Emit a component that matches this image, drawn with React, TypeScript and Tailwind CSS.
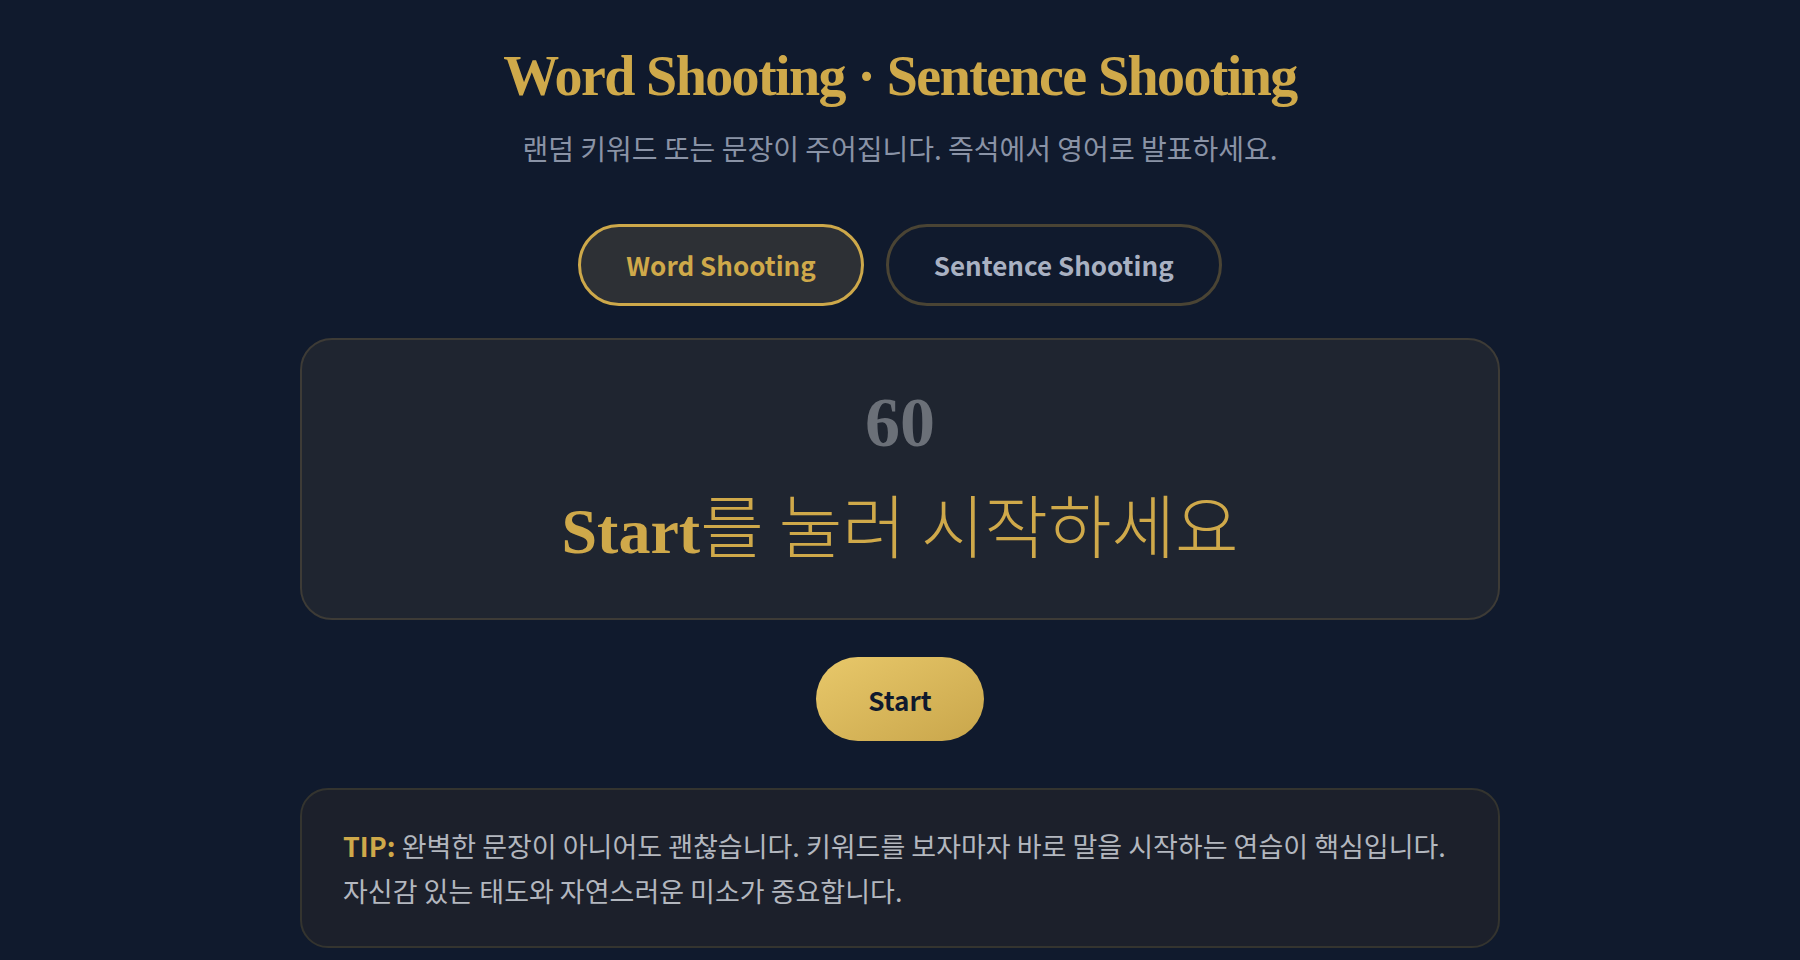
import { useState } from 'react';

type Mode = 'word' | 'sentence';

const MODES: { label: string; value: Mode }[] = [
  { label: 'Word Shooting', value: 'word' },
  { label: 'Sentence Shooting', value: 'sentence' },
];

const SANS = "font-['Noto_Sans_CJK_KR','Noto_Sans',sans-serif]";

export default function App() {
  const [mode, setMode] = useState<Mode>('word');

  return (
    <div className={`min-h-screen w-full bg-[#101a2d] ${SANS}`}>
      <div className="mx-auto flex w-[1200px] flex-col items-center pt-[44px]">
        {/* Heading */}
        <h1 className="font-['Liberation_Serif','DejaVu_Serif',serif] text-[56px] font-bold leading-[64px] tracking-[-1.6px] text-[#cfa94a]">
          Word Shooting · Sentence Shooting
        </h1>
        <p className="mt-[22px] text-[28px] leading-[36px] text-[#8a93a6]">
          랜덤 키워드 또는 문장이 주어집니다. 즉석에서 영어로 발표하세요.
        </p>

        {/* Mode tabs */}
        <div className="mt-[58px] flex gap-[22px]">
          {MODES.map(m => (
            <button
              key={m.value}
              onClick={() => setMode(m.value)}
              className={
                mode === m.value
                  ? 'cursor-pointer rounded-full border-[3px] border-[#cda84a] bg-[#2d3035] px-[45px] py-[17px] text-[26px] font-bold leading-[42px] text-[#cfa94a]'
                  : 'cursor-pointer rounded-full border-[3px] border-[#4a4434] bg-transparent px-[45px] py-[17px] text-[26px] font-bold leading-[42px] text-[#a9b1c2]'
              }
            >
              {m.label}
            </button>
          ))}
        </div>

        {/* Timer card */}
        <div className="mt-[32px] flex w-full flex-col items-center rounded-[32px] border-2 border-[#3d3b36] bg-[#1f2530] pt-[48px] pb-[48px]">
          <div className="font-['Liberation_Serif','DejaVu_Serif',serif] text-[70px] font-bold leading-[70px] text-[#6b7078]">
            60
          </div>
          <div className="mt-[27px] font-['Liberation_Serif',serif] text-[64px] leading-[77px] text-[#cfa94a]">
            <span className="font-bold">Start</span>
            <span className="font-['Noto_Sans_CJK_KR',sans-serif] text-[69px] font-light">를 눌러 시작하세요</span>
          </div>
        </div>

        {/* Start */}
        <button className="mt-[37px] flex h-[84px] w-[168px] cursor-pointer items-center justify-center rounded-full bg-gradient-to-br from-[#e8c86a] to-[#c9a64b] text-[26px] font-bold text-[#101a2d]">
          Start
        </button>

        {/* Tip */}
        <div className="mt-[47px] w-full rounded-[28px] border-2 border-[#34342f] bg-[#1c202b] px-[41px] py-[33px] text-[27px] leading-[45px] text-[#b3b7bf]">
          <strong className="font-bold text-[#cfa94a]">TIP:</strong> 완벽한 문장이 아니어도 괜찮습니다. 키워드를 보자마자 바로 말을 시작하는 연습이 핵심입니다.
          <br />
          자신감 있는 태도와 자연스러운 미소가 중요합니다.
        </div>
      </div>
    </div>
  );
}
